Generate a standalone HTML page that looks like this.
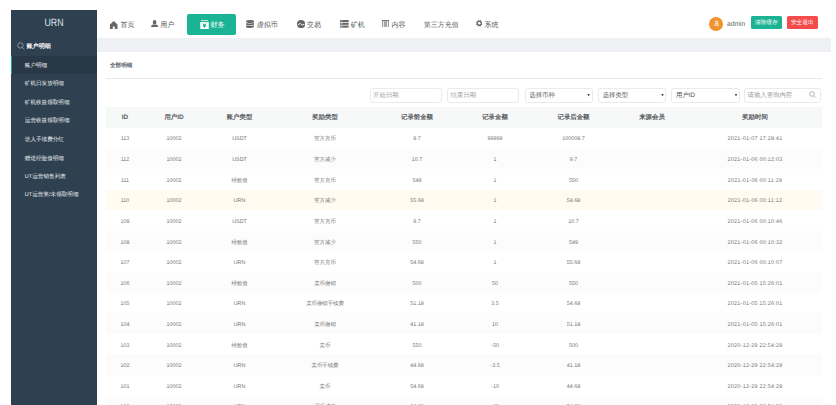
<!DOCTYPE html>
<html><head><meta charset="utf-8">
<style>
*{box-sizing:border-box;margin:0;padding:0}
html,body{width:836px;height:405px;overflow:hidden;background:#fff;text-rendering:geometricPrecision;font-family:"Liberation Sans",sans-serif;color:#676a6c}
.abs{position:absolute}
#side{left:11px;top:10px;width:86px;height:395px;background:#2f4050}
#logo{left:11px;top:17.1px;width:86px;text-align:center;color:#dfe4ed;font-size:10.6px;line-height:12px;transform:scaleX(0.83)}
#sh{left:17px;top:41px;color:#fff;font-size:6.1px;font-weight:bold;line-height:9px}
#sh svg{position:absolute;left:0;top:1px}
#sh span{position:absolute;left:9.5px;top:0.8px;white-space:nowrap}
.mi{position:absolute;left:24.8px;color:#f2f4f7;font-weight:500;font-size:5.6px;line-height:8px;white-space:nowrap}
#act{left:11px;top:55.7px;width:86px;height:18.1px;background:#293846;border-left:1.5px solid #19aa8d}
#hdr{left:97px;top:10px;width:734px;height:27.8px;background:#fff}
#band{left:97px;top:37.6px;width:734px;height:14px;background:#eff0f4}
.nav{position:absolute;top:22px;font-size:7px;line-height:8px;color:#555;white-space:nowrap}
.ico{position:absolute}
#btnfin{left:187.3px;top:14px;width:48.5px;height:20.6px;background:#1ab394;border-radius:2px}
.tbtn{position:absolute;top:16.2px;height:13.1px;width:31.2px;border-radius:1.5px;color:#fff;font-size:5.7px;line-height:15px;text-align:center}
#tab{left:110px;top:61.5px;font-size:5.6px;font-weight:bold;color:#575d66;line-height:8px}
#tabline{left:106px;top:78px;width:716px;height:0.6px;background:#e7eaec}
.inp{position:absolute;top:87.8px;height:14.9px;border:0.6px solid #e9eaeb;border-radius:2.5px;font-size:6.4px;line-height:14px;padding-left:2.6px;color:#999;white-space:nowrap}
.sel{color:#555;padding-left:3.8px}
.sel:after{content:"";position:absolute;right:1.6px;top:4.9px;width:2.8px;height:2.8px;background:#444;clip-path:polygon(0 0,100% 0,50% 100%)}
table{position:absolute;left:106px;top:106.6px;width:716px;border-collapse:collapse;table-layout:fixed}
td,th{text-align:center;font-size:5.4px;line-height:8px;padding:3px 0 0 0;white-space:nowrap;overflow:hidden}
th{font-weight:bold;color:#56595c;font-size:6.4px}
thead tr{background:#f7f8f8}
tbody tr:nth-child(even){background:#fcfcfc}
tbody tr.hl{background:#fffbf0}
td:last-child{letter-spacing:0.25px}
td{color:#737373;font-weight:500;height:20.62px}
th{height:21.1px;padding-top:2.6px}
</style></head><body>
<div id="side" class="abs"></div>
<div id="logo" class="abs">URN</div>
<div id="sh" class="abs"><svg width="8" height="8" viewBox="0 0 8 8"><circle cx="3.4" cy="3.4" r="2.7" fill="none" stroke="#a9afb7" stroke-width="0.75"/><line x1="5.4" y1="5.4" x2="7.4" y2="7.4" stroke="#a9afb7" stroke-width="0.75"/></svg><span>账户明细</span></div>
<div id="act" class="abs"></div>
<div class="mi" style="top:61.7px;color:#fff">账户明细</div>
<div class="mi" style="top:80.2px">矿机日发放明细</div>
<div class="mi" style="top:98.7px">矿机收益领取明细</div>
<div class="mi" style="top:117.1px">运营收益领取明细</div>
<div class="mi" style="top:136.2px">达人手续费分红</div>
<div class="mi" style="top:154.5px">赠送经验值明细</div>
<div class="mi" style="top:172.9px">UT运营销售列表</div>
<div class="mi" style="top:191.3px">UT运营奖/未领取明细</div>

<div id="hdr" class="abs"></div>
<div id="band" class="abs"></div>

<!-- nav -->
<svg class="ico" style="left:110.4px;top:21px" width="7.5" height="8" viewBox="0 0 15 16"><path d="M7.5 0L15 6.8V16H9.4V11H5.6V16H0V6.8Z" fill="#666"/></svg>
<div class="nav" style="left:120.4px">首页</div>
<svg class="ico" style="left:150.9px;top:20px" width="7.2" height="7" viewBox="0 0 14 14"><ellipse cx="7" cy="4.7" rx="3.5" ry="4.7" fill="#666"/><path d="M0 14C0 11.2 1.6 9.8 4.3 9.2L7 10.2L9.7 9.2C12.4 9.8 14 11.2 14 14Z" fill="#666"/></svg>
<div class="nav" style="left:160.3px">用户</div>
<div id="btnfin" class="abs"></div>
<svg class="ico" style="left:200px;top:20px" width="9" height="9" viewBox="0 0 18 18"><rect x="2" y="0.2" width="14" height="1.8" fill="#d5f1ea"/><rect x="0.4" y="4.2" width="17.2" height="13.8" fill="#fff"/><path d="M5.4 6.2L9 9L12.6 6.2L11.2 13.4L9 16.2L6.8 13.4Z" fill="#1ab394"/></svg>
<div class="nav" style="left:210.4px;color:#fff;font-weight:500">财务</div>
<svg class="ico" style="left:246px;top:20px" width="8.2" height="7.9" viewBox="0 0 16 16"><ellipse cx="8" cy="3" rx="8" ry="3" fill="#666"/><path d="M0 5Q0 7 8 7Q16 7 16 5V9Q16 11 8 11Q0 11 0 9Z" fill="#666"/><path d="M0 10.2Q0 12.2 8 12.2Q16 12.2 16 10.2V14Q16 16 8 16Q0 16 0 14Z" fill="#666"/></svg>
<div class="nav" style="left:256.7px">虚拟币</div>
<svg class="ico" style="left:297px;top:20px" width="8.2" height="8.2" viewBox="0 0 16 16"><circle cx="8" cy="8" r="8" fill="#666"/><path d="M1.5 9.6L6.3 6.6L9.6 9.8L14.5 8.6" stroke="#fff" stroke-width="1.7" fill="none"/></svg>
<div class="nav" style="left:307px">交易</div>
<svg class="ico" style="left:340px;top:20.2px" width="8.7" height="7.6" viewBox="0 0 17 15"><rect x="0" y="0" width="17" height="4" fill="#666"/><rect x="0" y="5.5" width="17" height="4" fill="#666"/><rect x="0" y="11" width="17" height="4" fill="#666"/><rect x="1.5" y="1.2" width="3" height="1.4" fill="#ddd"/><rect x="1.5" y="6.7" width="3" height="1.4" fill="#ddd"/><rect x="1.5" y="12.2" width="3" height="1.4" fill="#ddd"/></svg>
<div class="nav" style="left:350.8px">矿机</div>
<svg class="ico" style="left:382px;top:20px" width="6.9" height="6.9" viewBox="0 0 14 14"><rect x="0" y="0" width="14" height="14" fill="#777"/><rect x="1.5" y="2.4" width="11" height="11.6" fill="#fff"/><rect x="3.6" y="2.4" width="6.8" height="11.6" fill="#a5a5a5"/></svg>
<div class="nav" style="left:391.5px">内容</div>
<div class="nav" style="left:423.8px">第三方充值</div>
<svg class="ico" style="left:475.8px;top:20.4px" width="6.6" height="6.6" viewBox="0 0 16 16"><path d="M14.35 8.80L15.78 9.87L14.82 12.18L13.06 11.92L11.92 13.06L12.18 14.82L9.87 15.78L8.80 14.35L7.20 14.35L6.13 15.78L3.82 14.82L4.08 13.06L2.94 11.92L1.18 12.18L0.22 9.87L1.65 8.80L1.65 7.20L0.22 6.13L1.18 3.82L2.94 4.08L4.08 2.94L3.82 1.18L6.13 0.22L7.20 1.65L8.80 1.65L9.87 0.22L12.18 1.18L11.92 2.94L13.06 4.08L14.82 3.82L15.78 6.13L14.35 7.20Z" fill="#6a6a6a"/><circle cx="8" cy="8" r="3.1" fill="#fff"/></svg>
<div class="nav" style="left:484.4px">系统</div>

<!-- right -->
<div class="abs" style="left:709.4px;top:16.7px;width:14px;height:14px;border-radius:50%;background:#f0922e;color:#fff;font-size:9.8px;line-height:14.2px;text-align:center"><span style="display:inline-block;transform:scaleX(0.78)">a</span></div>
<div class="abs" style="left:727px;top:20.7px;font-size:7px;line-height:8px;color:#666;transform:scaleX(0.95);transform-origin:0 0">admin</div>
<div class="tbtn" style="left:750.6px;background:#1ab394">清除缓存</div>
<div class="tbtn" style="left:786.7px;background:#f44b4b">安全退出</div>

<div id="tab" class="abs">全部明细</div>
<div id="tabline" class="abs"></div>

<div class="inp" style="left:369.5px;width:72.3px">开始日期</div>
<div class="inp" style="left:447px;width:72.3px">结束日期</div>
<div class="inp sel" style="left:524.5px;width:68.1px">选择币种</div>
<div class="inp sel" style="left:597.9px;width:68.6px">选择类型</div>
<div class="inp sel" style="left:671.2px;width:68.8px">用户ID</div>
<div class="inp" style="left:743.9px;width:77.1px">请输入查询内容<svg style="position:absolute;right:4px;top:2px" width="7" height="7" viewBox="0 0 8 8"><circle cx="3.4" cy="3.4" r="2.7" fill="none" stroke="#9a9a9a" stroke-width="0.8"/><line x1="5.4" y1="5.4" x2="7.4" y2="7.4" stroke="#9a9a9a" stroke-width="0.8"/></svg></div>

<table>
<colgroup><col style="width:38px"><col style="width:60px"><col style="width:71px"><col style="width:100px"><col style="width:84px"><col style="width:72px"><col style="width:85px"><col style="width:72px"><col style="width:134px"></colgroup>
<thead><tr><th>ID</th><th>用户ID</th><th>账户类型</th><th>奖励类型</th><th>记录前金额</th><th>记录金额</th><th>记录后金额</th><th>来源会员</th><th>奖励时间</th></tr></thead>
<tbody>
<tr><td>113</td><td>10002</td><td>USDT</td><td>官方充币</td><td>9.7</td><td>99999</td><td>100008.7</td><td></td><td>2021-01-07 17:28:41</td></tr>
<tr><td>112</td><td>10002</td><td>USDT</td><td>官方减少</td><td>10.7</td><td>1</td><td>9.7</td><td></td><td>2021-01-06 00:12:03</td></tr>
<tr><td>111</td><td>10002</td><td>经验值</td><td>官方充币</td><td>549</td><td>1</td><td>550</td><td></td><td>2021-01-06 00:11:29</td></tr>
<tr class="hl"><td>110</td><td>10002</td><td>URN</td><td>官方减少</td><td>55.68</td><td>1</td><td>54.68</td><td></td><td>2021-01-06 00:11:12</td></tr>
<tr><td>109</td><td>10002</td><td>USDT</td><td>官方充币</td><td>9.7</td><td>1</td><td>10.7</td><td></td><td>2021-01-06 00:10:46</td></tr>
<tr><td>108</td><td>10002</td><td>经验值</td><td>官方减少</td><td>550</td><td>1</td><td>549</td><td></td><td>2021-01-06 00:10:32</td></tr>
<tr><td>107</td><td>10002</td><td>URN</td><td>官方充币</td><td>54.68</td><td>1</td><td>55.68</td><td></td><td>2021-01-06 00:10:07</td></tr>
<tr><td>106</td><td>10002</td><td>经验值</td><td>卖币撤销</td><td>500</td><td>50</td><td>550</td><td></td><td>2021-01-05 15:26:01</td></tr>
<tr><td>105</td><td>10002</td><td>URN</td><td>卖币撤销手续费</td><td>51.18</td><td>3.5</td><td>54.68</td><td></td><td>2021-01-05 15:26:01</td></tr>
<tr><td>104</td><td>10002</td><td>URN</td><td>卖币撤销</td><td>41.18</td><td>10</td><td>51.18</td><td></td><td>2021-01-05 15:26:01</td></tr>
<tr><td>103</td><td>10002</td><td>经验值</td><td>卖币</td><td>550</td><td>-50</td><td>500</td><td></td><td>2020-12-29 22:54:29</td></tr>
<tr><td>102</td><td>10002</td><td>URN</td><td>卖币手续费</td><td>44.68</td><td>-3.5</td><td>41.18</td><td></td><td>2020-12-29 22:54:29</td></tr>
<tr><td>101</td><td>10002</td><td>URN</td><td>卖币</td><td>54.68</td><td>-10</td><td>44.68</td><td></td><td>2020-12-29 22:54:29</td></tr>
<tr><td>100</td><td>10002</td><td>URN</td><td>买币成功</td><td>64.68</td><td>-10</td><td>54.68</td><td></td><td>2020-12-29 22:54:29</td></tr>
</tbody></table>
</body></html>
